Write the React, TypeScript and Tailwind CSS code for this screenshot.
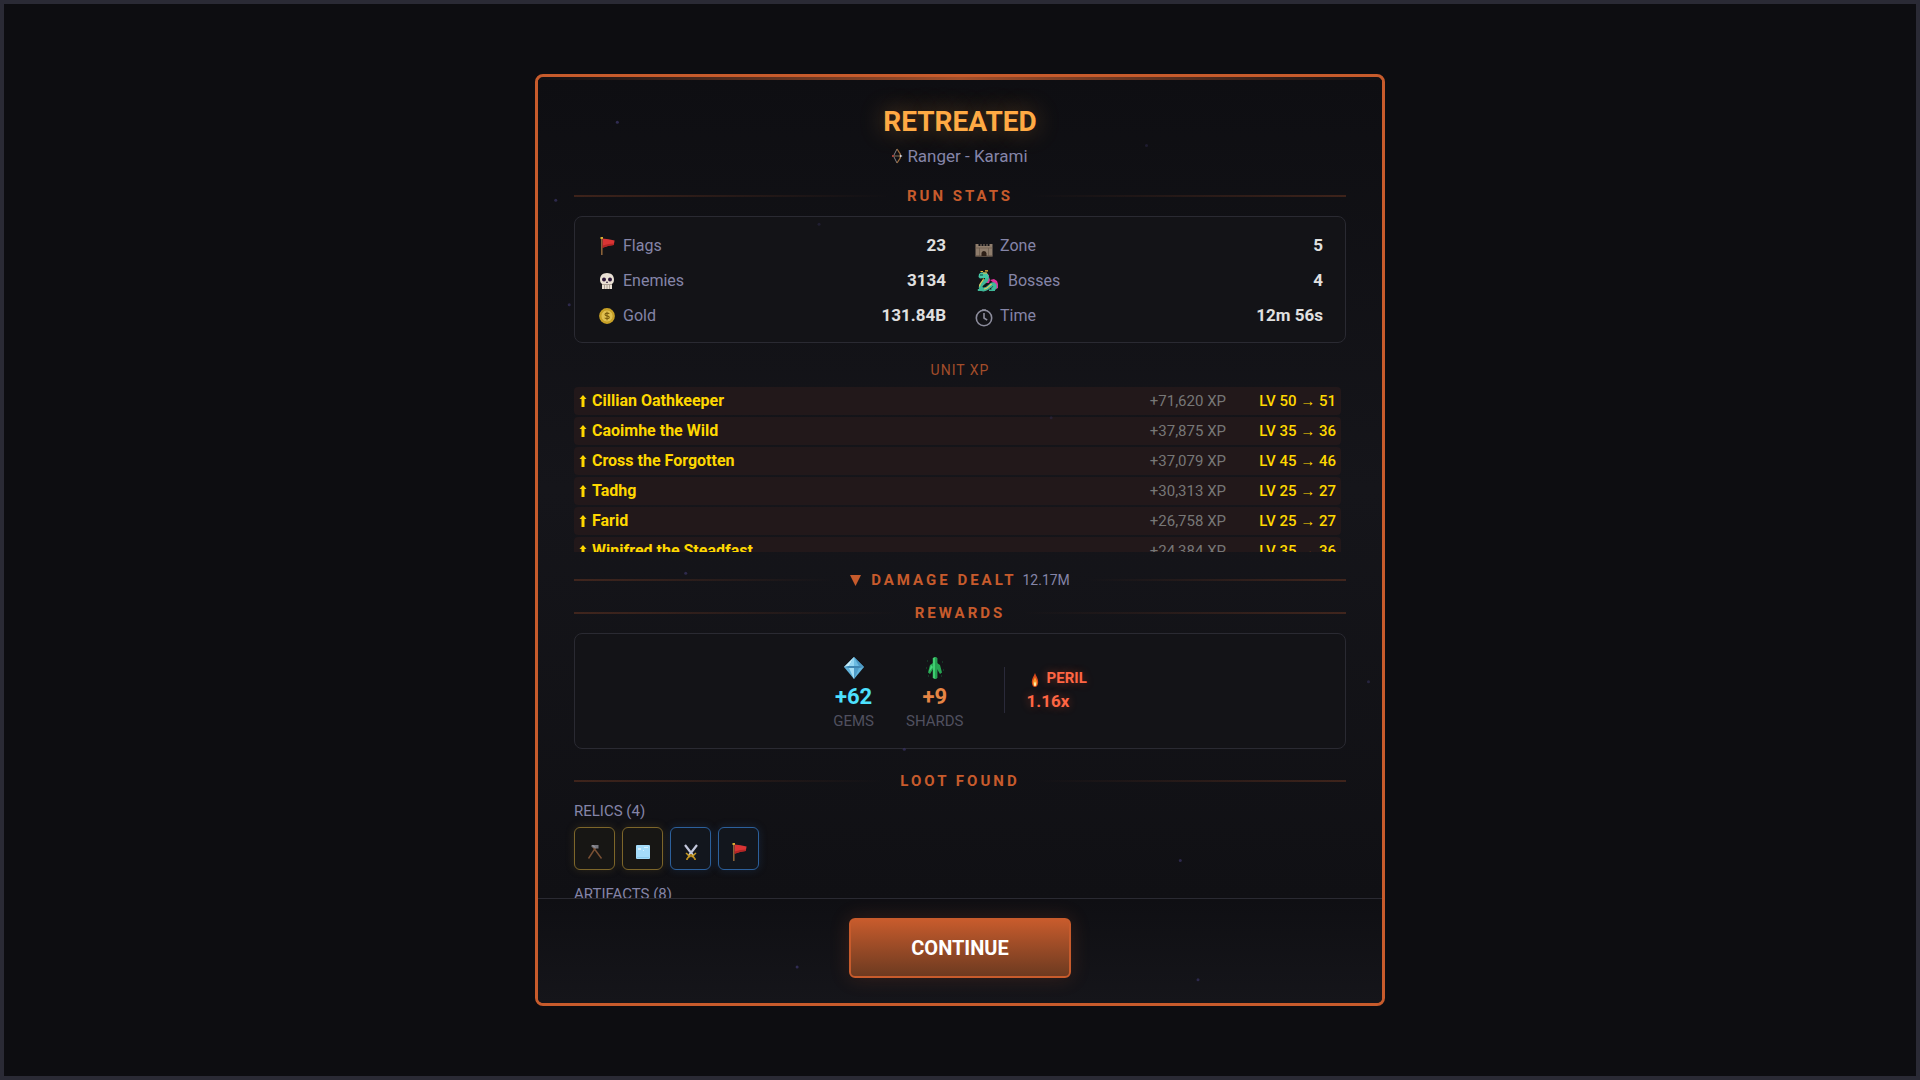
import React from 'react';
import type { ReactNode } from 'react';

type Stat = { label: string; value: string; icon: ReactNode };
type UnitXp = { name: string; xp: string; from: number; to: number };
type Relic = { name: string; rarity: 'legendary' | 'rare'; icon: ReactNode };

const FlagIcon = () => (
    <svg width="18" height="20" viewBox="0 0 18 20" aria-hidden="true">
        <path d="M3 3h1.600v16H3z" fill="#8a6238" />
        <path d="M2.500 1h2.500v2H2.500z" fill="#d9b030" />
        <path d="M4.600 2.500l6 .8 6 1.200-.8 4.500-5 .8-6.200 2z" fill="#d93434" />
        <path d="M4.600 9.500l6-1.500 5.400-.5-.2 1.500-5 .8-6.200 2z" fill="#b42525" />
    </svg>
);

const SkullIcon = () => (
    <svg width="16" height="18" viewBox="0 0 16 18" aria-hidden="true">
        <path d="M8 1c4.500 0 7 2.800 7 6.500 0 2.500-1 3.800-2 4.500v5H3v-5c-1-.7-2-2-2-4.500C1 3.800 3.500 1 8 1z" fill="#e9e0d4" />
        <circle cx="5" cy="7.500" r="2" fill="#2a1538" />
        <circle cx="11" cy="7.500" r="2" fill="#2a1538" />
        <path d="M8 9l1 2H7z" fill="#2a1538" />
        <path d="M3 12.500h10M5.500 13v4M8 13v4M10.500 13v4" stroke="#9a8f84" strokeWidth=".8" />
    </svg>
);

const CoinIcon = () => (
    <svg width="16" height="16" viewBox="0 0 16 16" aria-hidden="true">
        <circle cx="8" cy="8" r="7.900" fill="#c9a227" />
        <circle cx="8" cy="8" r="6" fill="#e0c04f" stroke="#b8921f" strokeWidth=".6" />
        <path d="M10.300 5.800c-.5-.8-4.300-1.200-4.300.6 0 1.900 4.300 1.100 4.300 3 0 1.700-3.900 1.500-4.600.4M8 3.800v8.400" fill="none" stroke="#7d5f10" strokeWidth="1.100" />
    </svg>
);

const CastleIcon = () => (
    <svg className="mt-2" width="18" height="14" viewBox="0 0 18 14" aria-hidden="true">
        <path d="M.5 1h3v2h2V1h1v2h2V1h1v2h2V1h1v2h2V1h3v12.500H.5z" fill="#8f7d6c" />
        <path d="M.5 5h17M4.500 5v8.500M13.500 5v8.500" stroke="#6a5a4c" strokeWidth=".7" />
        <path d="M.5 13h17" stroke="#5e5044" />
        <path d="M6.500 13v-2.500a2.500 2.500 0 015 0V13z" fill="#2d1f16" />
    </svg>
);

const DragonIcon = () => (
    <svg width="22" height="22" viewBox="0 0 22 22" aria-hidden="true">
        <path d="M10 4l2 1v2l1 3-1 3h-3zM13 10l4-1 3 2 1 3v4l-2 1-2-6z" fill="#e0309c" />
        <path d="M8 5c2 1 2.500 3 1.500 5L5 14c-2 2-2 5 1 5.500 3 .3 5-1.500 7-3.500 1.500-1.500 3-2.500 4.500-1 1.500 2 0 4-3 4.500" fill="none" stroke="#3fb898" strokeWidth="3.800" />
        <path d="M6.500 8.500c0 3-4 4-4 8M7 19c3 0 5-2.500 7.500-5" fill="none" stroke="#f0c850" strokeWidth="1.100" />
        <path d="M2 4l2-1.500h5L11 4v4H7L3 8.500 1.500 7z" fill="#45c8a6" />
        <path d="M3.500 1.500h2.500M8 .8h3M6 3h4" stroke="#f0b840" strokeWidth="1.200" />
        <path d="M3 5h3" stroke="#1a3a3a" />
        <path d="M.8 19h6v2h-6zM12 19.500h6v1.500h-6z" fill="#3fb898" />
    </svg>
);

const ClockIcon = () => (
    <svg className="mt-1" width="18" height="18" viewBox="0 0 18 18" fill="none" stroke="#8c8c9c" strokeWidth="1.600" aria-hidden="true">
        <circle cx="9" cy="9" r="7.700" />
        <path d="M9 4v5l3.200 2.200" />
        <path d="M7 .8h4" strokeWidth="1" />
    </svg>
);

const BowIcon = () => (
    <svg width="11" height="16" viewBox="0 0 11 16" fill="none" aria-hidden="true">
        <path d="M5 1L1.500 8 5 15" stroke="#8f8f96" strokeWidth=".9" />
        <path d="M5 1l3.200 5v4L5 15" stroke="#9a6a3c" strokeWidth="1.300" />
        <path d="M1 8h8" stroke="#a08868" strokeWidth=".8" />
        <path d="M8 6.500L10.500 8 8 9.500z" fill="#d4d4dc" />
        <path d="M0 7h2v2H0z" fill="#a04038" />
    </svg>
);

const GemIcon = () => (
    <svg width="22" height="24" viewBox="0 0 22 24" aria-hidden="true">
        <path d="M11 1l10 10-10 12L1 11z" fill="#62b4dc" />
        <path d="M11 1L1 11l5-1z" fill="#c4ecfa" />
        <path d="M11 1L6 10h5z" fill="#94d6f2" />
        <path d="M11 1v9h5z" fill="#6cbce2" />
        <path d="M11 1l10 10-5-1z" fill="#4c98c4" />
        <path d="M1 11l5-1h10l5 1-5 1H6z" fill="#3f86b2" />
        <path d="M6 12h5v11z" fill="#a6def4" />
        <path d="M11 12h5l-5 11z" fill="#4f9cc8" />
    </svg>
);

const ShardIcon = () => (
    <svg width="18" height="24" viewBox="0 0 18 24" aria-hidden="true">
        <path d="M9 1l2.200 1v20L9 23l-2.200-1V2z" fill="#3fcf70" />
        <path d="M9 1l2.200 1v20L9 23z" fill="#26a052" />
        <path d="M7 7L4 9l-2 7.500 2 1.500 3-5zM11 7l3 2 2 7.500-2 1.500-3-5z" fill="#27a552" />
        <path d="M5 9l-2 7 4-5z" fill="#48d87c" />
        <path d="M1 5h1M16 6h1M0 12h1M17 14h1M2 20h1M15 20h1" stroke="#1b5c36" />
    </svg>
);

const FlameIcon = () => (
    <svg className="mt-1" width="16" height="14" viewBox="0 0 16 14" aria-hidden="true">
        <path d="M8 0c1 3 3.200 5.500 3.200 9 0 3-1.500 5-3.200 5s-3.200-2-3.200-5C4.800 5.500 7 3 8 0z" fill="#d8481c" />
        <path d="M8 4c.8 2 2 3.500 2 5.800 0 2-.9 3.400-2 3.400s-2-1.400-2-3.400C6 7.500 7.200 6 8 4z" fill="#f79a2c" />
        <path d="M8 8.500c.6 1 1 1.500 1 2.700s-.5 1.800-1 1.800-1-.6-1-1.800.4-1.700 1-2.700z" fill="#fff0b0" />
    </svg>
);

const TorchesIcon = () => (
    <svg width="16" height="16" viewBox="0 0 16 16" fill="none" aria-hidden="true">
        <path d="M9 3L1.500 14.500M6 3l8.500 11.500" stroke="#7a5034" strokeWidth="1.400" />
        <path d="M4.500 1h7v3.500H8L4.500 3z" fill="#77777f" />
        <path d="M5.500 1l2.500 2.500" stroke="#a4a4ac" />
    </svg>
);

const IceIcon = () => (
    <svg width="16" height="16" viewBox="0 0 16 16" aria-hidden="true">
        <rect x="1" y="1" width="14" height="14" rx="1" fill="#a4dcfa" />
        <path d="M3 4h3v2H3zM9 3h4v1H9zM8 6h1v1H8z" fill="#d4f0ff" />
        <path d="M2 13h12v1H2z" fill="#8acbee" />
    </svg>
);

const SwordsIcon = () => (
    <svg width="16" height="18" viewBox="0 0 16 18" fill="none" aria-hidden="true">
        <path d="M2 2l8.500 11M14 2L5.500 13" stroke="#c3c8dc" strokeWidth="2.200" />
        <path d="M3 10l4.500 4M13 10l-4.500 4M4 16l3-4M12 16l-3-4" stroke="#c79a24" strokeWidth="1.600" />
        <path d="M3 15.500h2v1.500H3zM11 15.500h2v1.500h-2zM7 11h2v2H7z" fill="#a87c1c" />
    </svg>
);

const ArrowUp = () => (
    <svg width="8" height="14" viewBox="0 0 8 14" fill="#ffd700" aria-hidden="true">
        <path d="M4 1l3.500 4H5.500v8h-3V5h-2z" />
    </svg>
);

const stats: Stat[] = [
    { label: 'Flags', value: '23', icon: <FlagIcon /> },
    { label: 'Zone', value: '5', icon: <CastleIcon /> },
    { label: 'Enemies', value: '3134', icon: <SkullIcon /> },
    { label: 'Bosses', value: '4', icon: <DragonIcon /> },
    { label: 'Gold', value: '131.84B', icon: <CoinIcon /> },
    { label: 'Time', value: '12m 56s', icon: <ClockIcon /> }
];

const units: UnitXp[] = [
    { name: 'Cillian Oathkeeper', xp: '71,620', from: 50, to: 51 },
    { name: 'Caoimhe the Wild', xp: '37,875', from: 35, to: 36 },
    { name: 'Cross the Forgotten', xp: '37,079', from: 45, to: 46 },
    { name: 'Tadhg', xp: '30,313', from: 25, to: 27 },
    { name: 'Farid', xp: '26,758', from: 25, to: 27 },
    { name: 'Winifred the Steadfast', xp: '24,384', from: 35, to: 36 }
];

const relics: Relic[] = [
    { name: 'Crossed torches', rarity: 'legendary', icon: <TorchesIcon /> },
    { name: 'Ice block', rarity: 'legendary', icon: <IceIcon /> },
    { name: 'Twin swords', rarity: 'rare', icon: <SwordsIcon /> },
    { name: 'War flag', rarity: 'rare', icon: <FlagIcon /> }
];

const embers = [
    [9.4, 4.9, 0.9],
    [2.1, 13.3, 0.8],
    [3.7, 24.6, 0.8],
    [72.1, 7.4, 0.4],
    [33.3, 15.9, 0.4],
    [60.8, 36.8, 0.4],
    [17.5, 53.6, 0.8],
    [43.4, 72.6, 0.8],
    [30.7, 96.1, 0.9],
    [78.2, 97.5, 0.8],
    [76.1, 84.6, 0.8],
    [98.4, 65.3, 0.6]
];

const SectionTitle = ({ children, className }: { children: ReactNode; className: string }) => (
    <div className={`flex items-center gap-4 ${className}`}>
        <span className="h-0.5 flex-1 bg-gradient-to-r from-[#c75b2c]/25 to-transparent" />
        <h2 className="text-[15px] leading-5 font-bold tracking-[3px] text-[#c75b2c]">{children}</h2>
        <span className="h-0.5 flex-1 bg-gradient-to-l from-[#c75b2c]/25 to-transparent" />
    </div>
);

const StatRow = ({ stat }: { stat: Stat }) => (
    <div className="flex h-[35px] items-center justify-between">
        <dt className="flex items-center gap-1.5 text-base text-[#8585a8]">
            <span className={`flex justify-center ${stat.label === 'Bosses' ? 'w-7' : 'w-5'}`}>{stat.icon}</span>
            {stat.label}
        </dt>
        <dd className="text-[17px] font-bold text-[#e0e0e0]">{stat.value}</dd>
    </div>
);

const App: React.FC = () => {
    return (
        <div className="flex h-screen justify-center border-4 border-[#2a2a35] bg-[#0d0d11] py-[70px] font-['Roboto','Liberation_Sans',sans-serif]">
            <main className="relative flex w-full max-w-[850px] flex-col overflow-hidden rounded-lg border-[3px] border-[#c75b2c] bg-[#101014]">
                <div className="h-[3px] shrink-0 bg-gradient-to-r from-transparent via-[#a04f2c] to-transparent" />
                <div className="min-h-0 flex-1 overflow-hidden bg-gradient-to-b from-[#0e0e12] via-[#15151a] to-[#101014] px-9 pt-6">
                    <header className="text-center">
                        <h1 className="text-[28px] leading-9 font-bold text-[#ffaa44] [text-shadow:0_0_24px_rgba(255,170,68,0.4)]">RETREATED</h1>
                        <p className="mt-1 flex items-center justify-center gap-1 text-[17px] leading-6 text-[#8585a8]">
                            <BowIcon />
                            Ranger - Karami
                        </p>
                    </header>

                    <SectionTitle className="mt-[18px]">RUN STATS</SectionTitle>
                    <dl className="mt-2.5 grid grid-cols-2 gap-x-7 rounded-lg border border-[#2a2a32] bg-[#131317] px-[22px] pt-[11px] pb-[9px]">
                        {stats.map((stat) => (
                            <StatRow key={stat.label} stat={stat} />
                        ))}
                    </dl>

                    <h3 className="mt-[17px] text-center text-sm leading-5 tracking-[1px] text-[#a34d2a]">UNIT XP</h3>
                    <div className="mt-[7px] h-[165px] overflow-hidden pr-[5px]">
                        <table className="block text-[15px]">
                            <tbody className="flex flex-col gap-0.5">
                                {units.map((unit) => (
                                    <tr key={unit.name} className="flex h-7 items-center rounded-sm bg-[#22181a] px-[5px]">
                                        <th scope="row" className="flex flex-1 items-center gap-[5px] text-left text-base font-bold text-[#ffd700]">
                                            <ArrowUp />
                                            {unit.name}
                                        </th>
                                        <td className="text-[#777777]">+{unit.xp} XP</td>
                                        <td className="w-[110px] text-right font-medium text-[#ffd700]">
                                            LV {unit.from} → {unit.to}
                                        </td>
                                    </tr>
                                ))}
                            </tbody>
                        </table>
                    </div>

                    <SectionTitle className="mt-[18px]">
                        <button className="flex items-center">
                            <svg className="mr-2.5" width="11" height="11" viewBox="0 0 11 11" fill="#c75b2c" aria-hidden="true">
                                <path d="M0 0h11L5.500 11z" />
                            </svg>
                            <span className="tracking-[3px]">DAMAGE DEALT</span>
                            <span className="ml-1.5 text-sm leading-5 font-normal tracking-normal text-[#8585a8]">12.17M</span>
                        </button>
                    </SectionTitle>

                    <SectionTitle className="mt-[13px]">REWARDS</SectionTitle>
                    <div className="mt-2.5 flex items-center justify-center gap-8 rounded-lg border border-[#2a2a32] bg-[#131317] pt-[22px] pb-[17px] text-center">
                        <div className="flex flex-col items-center">
                            <GemIcon />
                            <strong className="mt-[3px] text-[22px] leading-7 text-[#4de1ff]">+62</strong>
                            <span className="text-[15px] leading-5 text-[#50505f]">GEMS</span>
                        </div>
                        <div className="flex flex-col items-center">
                            <ShardIcon />
                            <strong className="mt-[3px] text-[22px] leading-7 text-[#e58545]">+9</strong>
                            <span className="text-[15px] leading-5 text-[#50505f]">SHARDS</span>
                        </div>
                        <div className="mb-2 ml-2 border-l border-[#2a2a3a] pl-[22px] text-left text-[#ff6644] [text-shadow:0_0_8px_rgba(255,80,40,0.4)]">
                            <div className="flex items-center gap-1 text-[15px] leading-[22px] font-bold">
                                <FlameIcon />
                                PERIL
                            </div>
                            <div className="text-[17px] leading-6 font-bold">1.16x</div>
                        </div>
                    </div>

                    <SectionTitle className="mt-[22px]">LOOT FOUND</SectionTitle>
                    <h3 className="mt-2.5 text-[15px] leading-5 text-[#8585a8]">RELICS (4)</h3>
                    <div className="mt-1.5 flex gap-[7px]">
                        {relics.map((relic) => (
                            <button
                                key={relic.name}
                                aria-label={relic.name}
                                className={`flex h-[43px] w-[41px] items-center justify-center rounded-md border pt-1.5 ${
                                    relic.rarity === 'legendary'
                                        ? 'border-[#7d662a] bg-[#171614] shadow-[0_0_8px_rgba(125,102,42,0.25)]'
                                        : 'border-[#2c609c] bg-[#12161d] shadow-[0_0_8px_rgba(44,96,156,0.25)]'
                                }`}
                            >
                                {relic.icon}
                            </button>
                        ))}
                    </div>
                    <h3 className="mt-3.5 text-[15px] leading-5 text-[#8585a8]">ARTIFACTS (8)</h3>
                </div>

                <footer className="flex justify-center border-t border-[#2a2a32] bg-gradient-to-b from-[#0f0f13] to-[#15151a] pt-[19px] pb-[25px]">
                    <button className="h-[60px] w-[222px] rounded-md border-2 border-[#c75b2c] bg-gradient-to-b from-[#c75b2c] to-[#6d3a20] text-xl font-bold text-white shadow-[0_0_20px_rgba(199,91,44,0.2)]">
                        CONTINUE
                    </button>
                </footer>

                <svg className="pointer-events-none absolute inset-0 h-full w-full" aria-hidden="true">
                    {embers.map(([x, y, alpha]) => (
                        <circle key={`${x}-${y}`} cx={`${x}%`} cy={`${y}%`} r="1.500" fill="#34305a" opacity={alpha} />
                    ))}
                </svg>
            </main>
        </div>
    );
};

export default App;
